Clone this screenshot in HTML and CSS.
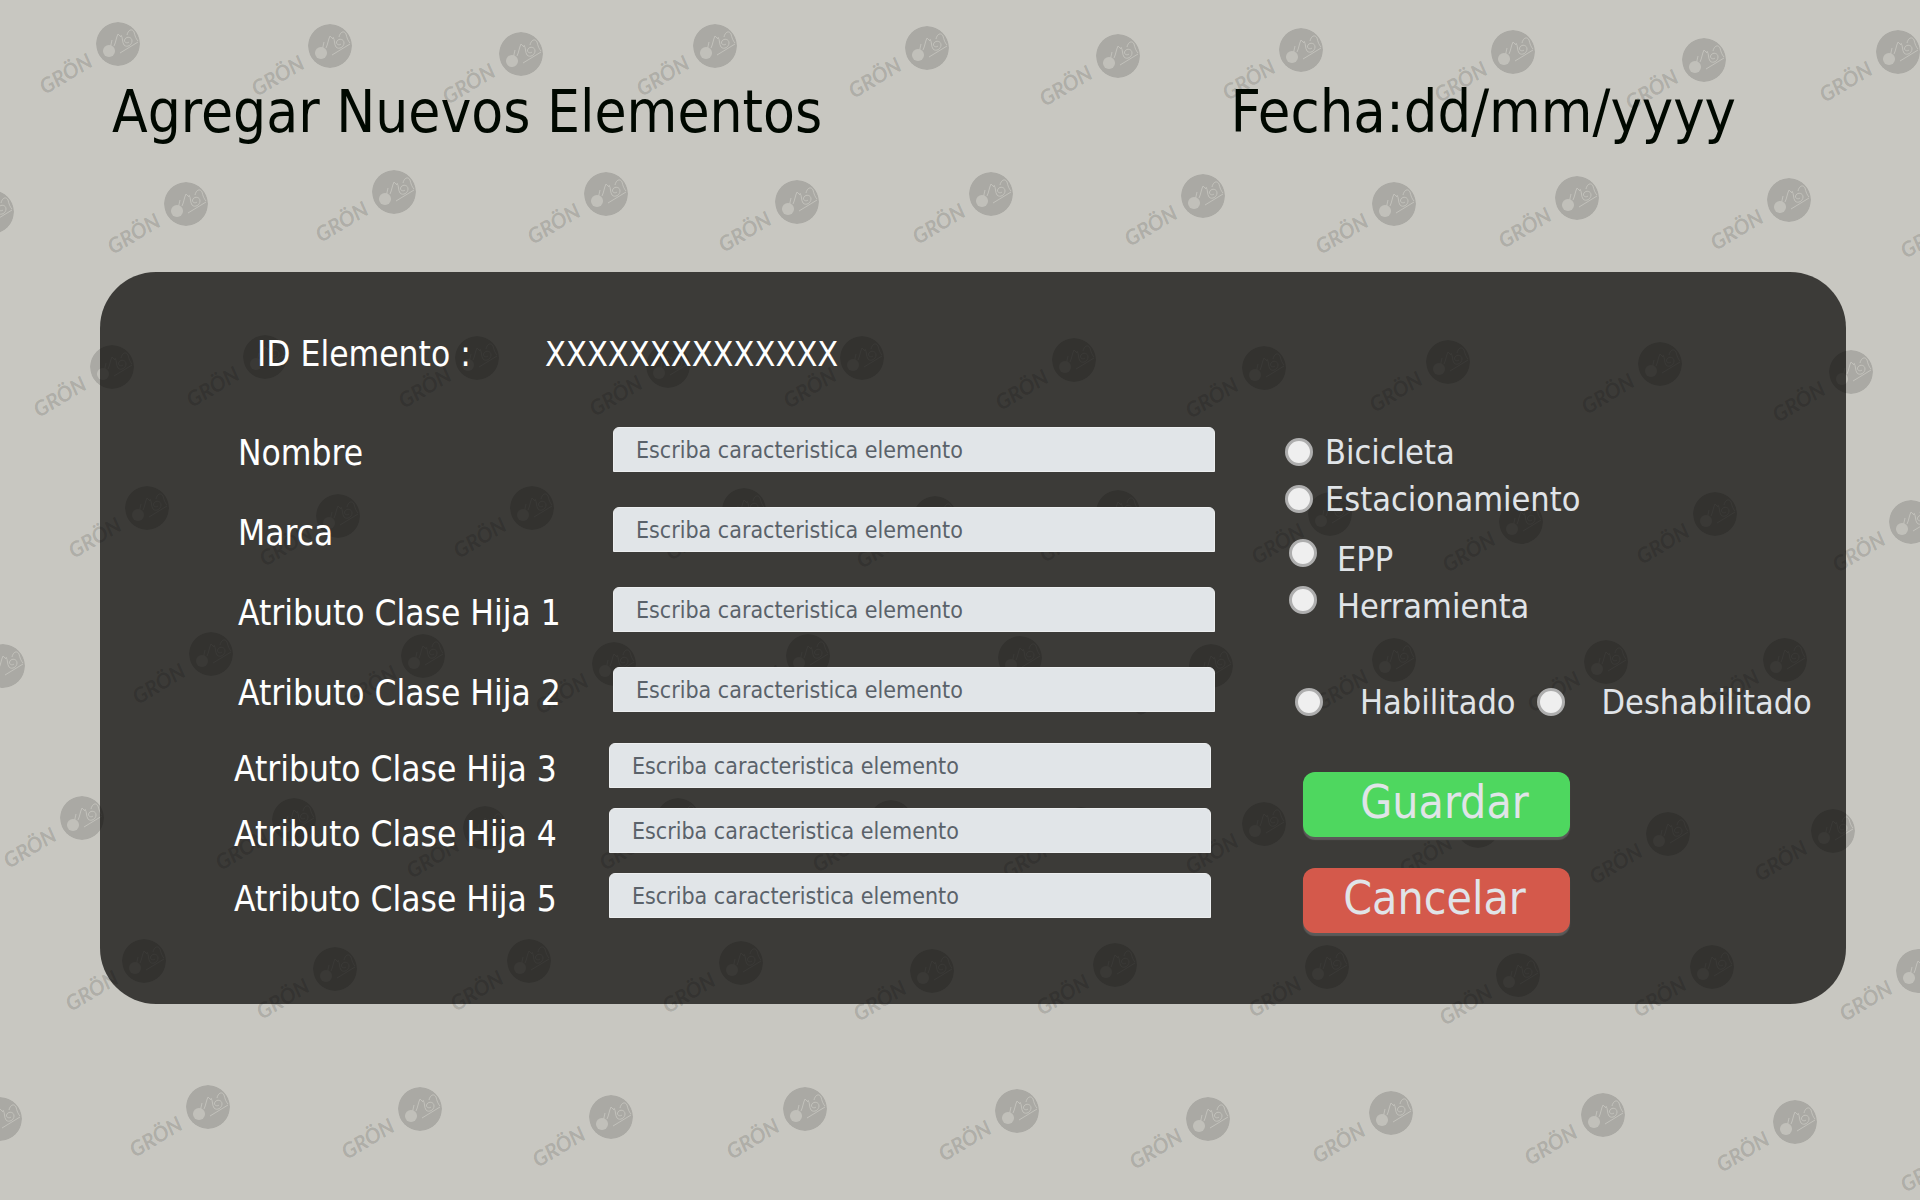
FILE: index.html
```html
<!DOCTYPE html>
<html lang="es">
<head>
<meta charset="utf-8">
<meta name="viewport" content="width=device-width, initial-scale=1">
<title>Agregar Nuevos Elementos</title>
<link rel="stylesheet" href="styles.css">
</head>
<body>
<svg class="marks" viewBox="0 0 1920 1200" preserveAspectRatio="xMinYMin slice" aria-hidden="true">
  <defs>
    <mask id="bike" maskUnits="userSpaceOnUse" x="-24" y="-24" width="48" height="48">
      <circle r="22" fill="#fff"/>
      <circle cx="-9" cy="7" r="6" fill="#333"/>
      <path class="mask-line" d="M-8 5 L-6 -4 M-4 2 C-2 -2 -2 -6 0 -10 L3 -7 M3 -9 C5 -6 4 -2 6 1 C9 4 14 1 14 -3 C14 -7 9 -8 7 -5 C5 -2 9 0 11 -2 M9 -9 C10 -14 14 -16 16 -12 C17 -8 18 -5 20 -3 M2 9 L20 -2"/>
    </mask>
    <g id="mark">
      <circle class="mark-disc" r="22" mask="url(#bike)"/>
      <text class="mark-name" transform="translate(-73 51) rotate(-31)">GRÖN</text>
    </g>
  </defs>
  <g id="rows"></g>
</svg>

<header class="header">
  <h1 class="title">Agregar Nuevos Elementos</h1>
  <p class="title date">Fecha:dd/mm/yyyy</p>
</header>

<main class="panel">
  <form class="form">
    <div class="fields">
      <dl class="ident">
        <dt>ID Elemento :</dt>
        <dd>XXXXXXXXXXXXXX</dd>
      </dl>
      <div class="group">
        <label for="nombre">Nombre</label><input id="nombre" type="text" placeholder="Escriba caracteristica elemento">
        <label for="marca">Marca</label><input id="marca" type="text" placeholder="Escriba caracteristica elemento">
        <label for="attr1">Atributo Clase Hija 1</label><input id="attr1" type="text" placeholder="Escriba caracteristica elemento">
        <label for="attr2">Atributo Clase Hija 2</label><input id="attr2" type="text" placeholder="Escriba caracteristica elemento">
      </div>
      <div class="group group-tight">
        <label for="attr3">Atributo Clase Hija 3</label><input id="attr3" type="text" placeholder="Escriba caracteristica elemento">
        <label for="attr4">Atributo Clase Hija 4</label><input id="attr4" type="text" placeholder="Escriba caracteristica elemento">
        <label for="attr5">Atributo Clase Hija 5</label><input id="attr5" type="text" placeholder="Escriba caracteristica elemento">
      </div>
    </div>

    <div class="side">
      <div class="options" role="radiogroup" aria-label="Tipo">
        <div class="option"><input type="radio" name="tipo" id="bicicleta"><label for="bicicleta">Bicicleta</label></div>
        <div class="option"><input type="radio" name="tipo" id="estacionamiento"><label for="estacionamiento">Estacionamiento</label></div>
      </div>
      <div class="options options-low">
        <div class="option"><input type="radio" name="tipo" id="epp"><label for="epp">EPP</label></div>
        <div class="option"><input type="radio" name="tipo" id="herramienta"><label for="herramienta">Herramienta</label></div>
      </div>
      <div class="status" role="radiogroup" aria-label="Estado">
        <div class="option"><input type="radio" name="estado" id="habilitado"><label for="habilitado">Habilitado</label></div>
        <div class="option"><input type="radio" name="estado" id="deshabilitado"><label for="deshabilitado">Deshabilitado</label></div>
      </div>
      <div class="actions">
        <button class="button save" type="submit">Guardar</button>
        <button class="button cancel" type="button">Cancelar</button>
      </div>
    </div>
  </form>
</main>
<script src="marks.js"></script>
</body>
</html>
```
FILE: marks.js
```js
// Centres of the logo discs on the 1920 x 1200 background canvas, row by row.
const rows = [
  [[118,44],[330,46],[521,54],[715,46],[927,48],[1118,56],[1301,50],[1513,52],[1704,60],[1898,52]],
  [[-8,212],[186,204],[394,192],[606,194],[797,202],[991,194],[1203,196],[1394,204],[1577,198],[1789,200],[1979,208]],
  [[112,367],[265,357],[477,358],[668,366],[862,358],[1074,360],[1264,368],[1448,362],[1660,364],[1851,372]],
  [[147,508],[338,516],[532,508],[744,510],[935,518],[1118,512],[1330,514],[1521,522],[1715,514],[1911,522]],
  [[3,666],[211,654],[423,656],[614,664],[808,656],[1020,658],[1211,666],[1394,660],[1606,662],[1785,660]],
  [[82,818],[294,820],[485,828],[678,820],[891,822],[1081,829],[1264,824],[1478,826],[1668,834],[1833,831]],
  [[144,961],[335,969],[529,961],[741,963],[932,971],[1115,965],[1327,967],[1518,975],[1712,967],[1918,971]],
  [[0,1119],[208,1107],[420,1109],[611,1117],[805,1109],[1017,1111],[1208,1119],[1391,1113],[1603,1115],[1795,1122],[1979,1142]]
];
const layer = document.getElementById('rows');
for (const [x, y] of rows.flat()) {
  const use = document.createElementNS('http://www.w3.org/2000/svg', 'use');
  use.setAttribute('href', '#mark');
  use.setAttribute('x', x);
  use.setAttribute('y', y);
  layer.append(use);
}
```
FILE: styles.css
```css
* { box-sizing: border-box; }

html { height: 100%; }

body {
  position: relative;
  min-height: 100%;
  margin: 0;
  overflow-x: hidden;
  background: #c8c7c1;
  color: #000800;
  font-family: "DejaVu Sans Condensed", "Noto Sans", sans-serif;
}

/* The logo layer lies over the panel's fill and under its content. */
.marks {
  position: absolute;
  inset: 0;
  z-index: 1;
  width: 100%;
  height: 100%;
  pointer-events: none;
}
.mark-disc { fill: #000; fill-opacity: .15; }
.mask-line { fill: none; stroke: #333; stroke-width: 1; }
.mark-name {
  fill: #000;
  fill-opacity: .15;
  font: italic 700 21px Lato, "Liberation Sans", sans-serif;
}

.header {
  position: relative;
  z-index: 2;
  display: flex;
  justify-content: space-between;
  padding: 76px 184px 124px 112px;
}
.title {
  margin: 0;
  font-size: 58px;
  font-weight: 400;
  line-height: 72px;
}
.date { font-size: 59px; }

.panel {
  margin: 0 74px 0 100px;
  padding: 60px 0 71px;
  border-radius: 56px;
  background: #3c3b38;
}
.form {
  position: relative;
  z-index: 2;
  display: grid;
  grid-template-columns: minmax(0, 1fr) 561px;
  column-gap: 70px;
}
.fields { color: #fff; font-size: 35px; }

.ident {
  display: grid;
  grid-template-columns: 288px 1fr;
  margin: 0 0 51px;
  padding-left: 157px;
  line-height: 44px;
}
.ident dd { margin: 0; font-size: 34px; }

.group {
  display: grid;
  grid-template-columns: 375px 1fr;
  row-gap: 35px;
  align-items: center;
  margin-bottom: 31px;
  padding-left: 138px;
}
.group-tight {
  row-gap: 20px;
  margin: 0 4px 0 0;
  padding-left: 134px;
}
.group label {
  height: 45px;
  padding-top: 4px;
  line-height: 45px;
}
.group input {
  width: 100%;
  height: 45px;
  padding: 0 22px;
  border: 1px solid #eceeef;
  border-radius: 6px 6px 0 0;
  background: #e1e5e8;
  color: #5a626a;
  font: 23px "DejaVu Sans Condensed", "Noto Sans", sans-serif;
}
.group input::placeholder { color: #5a626a; opacity: 1; }

.side {
  padding-top: 98px;
  color: #e0e4e8;
  font-size: 34px;
}
.options { display: grid; row-gap: 3px; }
.option {
  display: flex;
  align-items: center;
  gap: 12px;
  line-height: 44px;
}
.options-low { padding: 10px 0 0 4px; }
.options-low .option { gap: 20px; }
.options-low label { padding-top: 6px; margin-bottom: -6px; }

.option input {
  appearance: none;
  flex: none;
  width: 28px;
  height: 28px;
  margin: 0;
  border: 3px solid #aeaeae;
  border-radius: 50%;
  background: #efefef;
}
.option input:checked { background: #4ed75f; }

.status {
  display: flex;
  gap: 21px;
  padding: 58px 0 0 10px;
}
.status .option { gap: 37px; }

.actions {
  display: grid;
  justify-items: start;
  row-gap: 31px;
  padding: 48px 0 0 18px;
}
.button {
  width: 267px;
  height: 65px;
  padding: 0 0 6px;
  border: 0;
  border-radius: 12px;
  box-shadow: 0 3px 1px #5b5a59;
  color: #e0e4e8;
  font: 46px "DejaVu Sans Condensed", "Noto Sans", sans-serif;
}
.save { padding-left: 16px; background: #4ed75f; }
.cancel { padding-right: 4px; background: #d4594b; }
```
